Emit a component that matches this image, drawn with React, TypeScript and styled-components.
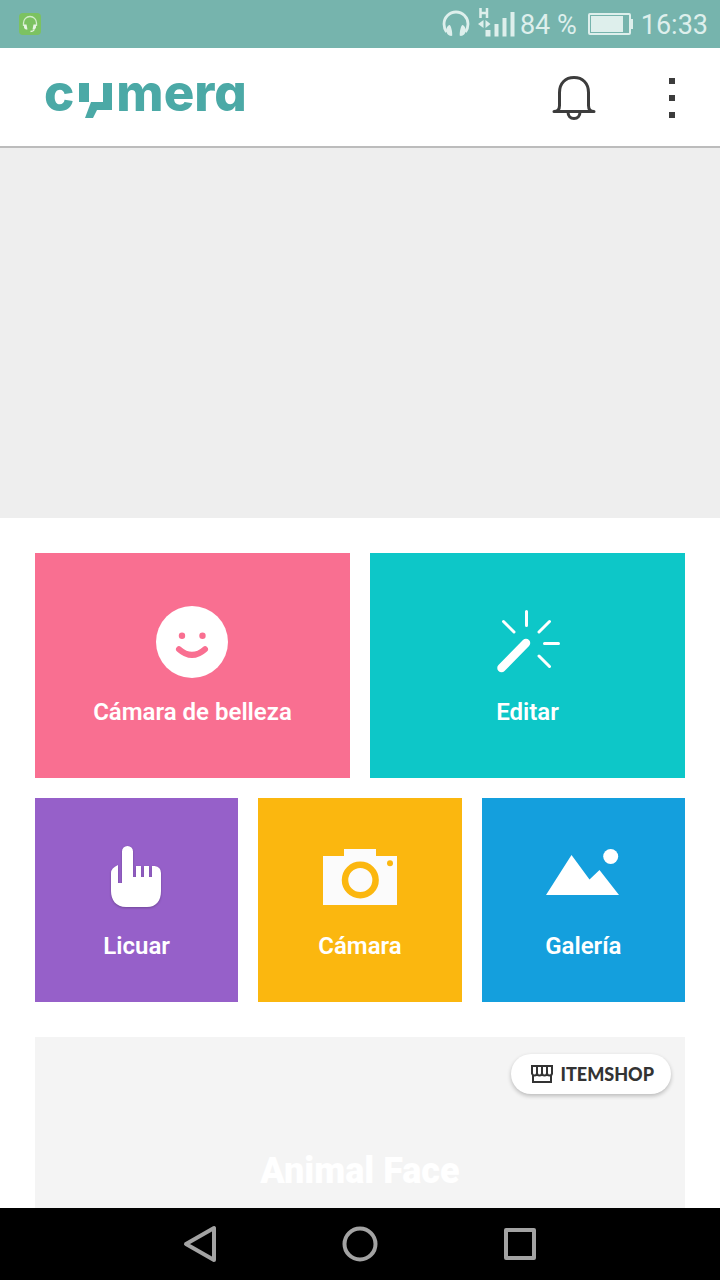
import React from "react";
import styled, { createGlobalStyle } from "styled-components";

const GlobalStyle = createGlobalStyle`
  * { box-sizing: border-box; }
  body { margin: 0; background: #ffffff; font-family: Roboto, "Liberation Sans", sans-serif; }
  button { margin: 0; padding: 0; border: 0; background: none; font: inherit; color: inherit; cursor: pointer; }
  svg { display: block; }
`;

const Screen = styled.div`
  display: flex;
  flex-direction: column;
  height: 100vh;
`;

const StatusBar = styled.div`
  flex: none;
  display: flex;
  align-items: center;
  justify-content: space-between;
  height: 48px;
  padding: 0 12px 0 18px;
  background: #76b4ad;
  color: #deefec;
  font-size: 27px;
  line-height: 32px;
`;

const StatusGroup = styled.div`
  display: flex;
  align-items: center;
  gap: 8px;
`;

const StatusText = styled.span`
  padding-top: 2px;
  white-space: nowrap;
`;

const SignalGroup = styled.div`
  display: flex;
  align-items: center;
  gap: 4px;
  padding-right: 3px;
`;

const Header = styled.header`
  flex: none;
  display: flex;
  align-items: center;
  gap: 50px;
  height: 100px;
  padding: 0 24px 0 44px;
  background: #ffffff;
  border-bottom: 2px solid #bcbcbc;
`;

const Logo = styled.h1`
  display: flex;
  align-items: center;
  gap: 4px;
  margin: 0 auto 0 0;
  color: #4ba9a6;
  font-family: Inter, "Liberation Sans", sans-serif;
  font-size: 51px;
  line-height: 60px;
  font-weight: 800;
  font-feature-settings: "cv11";
`;

const LogoText = styled.span`
  padding-bottom: 8px;
`;

const HeaderButton = styled.button`
  display: grid;
  place-items: center;
  width: 48px;
  height: 60px;
  padding-top: 2px;
`;

const Content = styled.main`
  flex: 1;
  min-height: 0;
  overflow-y: auto;
  scrollbar-width: none;
`;

const Banner = styled.section`
  height: 370px;
  background: #eeeeee;
`;

const Body = styled.div`
  display: flex;
  flex-direction: column;
  gap: 35px;
  padding: 35px;
`;

const Tiles = styled.nav`
  display: grid;
  grid-template-columns: repeat(6, 1fr);
  gap: 20px;
`;

const Tile = styled.button<{ $color: string; $large?: boolean }>`
  grid-column: span ${(p) => (p.$large ? 3 : 2)};
  display: flex;
  flex-direction: column;
  align-items: center;
  justify-content: flex-start;
  gap: ${(p) => (p.$large ? 20 : 22)}px;
  height: ${(p) => (p.$large ? 225 : 204)}px;
  padding-top: ${(p) => (p.$large ? 53 : 48)}px;
  background: ${(p) => p.$color};
  color: #ffffff;
  font-size: 24px;
  line-height: 28px;
  font-weight: 600;
`;

const ShopCard = styled.section`
  display: flex;
  flex-direction: column;
  height: 320px;
  padding: 17px 14px;
  background: #f4f4f4;
`;

const ShopButton = styled.button`
  align-self: flex-end;
  display: flex;
  align-items: center;
  gap: 7px;
  height: 40px;
  padding: 0 17px 0 19px;
  border-radius: 20px;
  background: #ffffff;
  box-shadow: 0 2px 4px rgba(0, 0, 0, 0.24);
  color: #333333;
  font-family: Lato, "Liberation Sans", sans-serif;
  font-size: 18px;
  line-height: 24px;
  font-weight: 900;
`;

const ShopTitle = styled.h2`
  margin: 55px 0 0;
  color: #ffffff;
  font-size: 36px;
  line-height: 44px;
  font-weight: 900;
  text-align: center;
`;

const SystemNav = styled.nav`
  flex: none;
  display: flex;
  align-items: center;
  justify-content: center;
  gap: 80px;
  height: 72px;
  background: #000000;
`;

const SystemButton = styled.button`
  display: grid;
  place-items: center;
  width: 80px;
  height: 72px;
`;

const ShadowedIcon = styled.svg`
  filter: drop-shadow(0 1px 1px rgba(0, 0, 0, 0.25));
`;

const AppBadge = () => (
  <svg width="24" height="24" viewBox="0 0 24 24" aria-hidden="true">
    <rect x="1" y="1" width="22" height="22" rx="4" fill="#7cc261" />
    <path d="M5.5 14v-3a6.5 6.5 0 0 1 13 0v3" fill="none" stroke="#d3eccc" strokeWidth="1.3" />
    <path d="M6 12.5h2.5l1 5H8a2.5 2.5 0 0 1-2-2zM18 12.5h-2.5l-1 5H16a2.5 2.5 0 0 0 2-2z" fill="#e7f5e3" />
    <path d="M16.5 17.5c-1 1.5-2 2-4 2" fill="none" stroke="#e7f5e3" strokeWidth="1.3" />
  </svg>
);

const HeadphonesIcon = () => (
  <svg width="28" height="28" viewBox="0 0 28 28" aria-hidden="true">
    <path d="M4.5 22C2.5 19 2 16.500 2 14a12 12 0 0 1 24 0c0 2.500-.5 5-2.500 8" fill="none" stroke="#deefec" strokeWidth="2.8" />
    <path d="M7.8 15c1.500 1.500 2.800 7.500 2.400 10.800-3 .7-5.600-1.600-5.900-4.800-.2-2.500 1-5.500 3.500-6zM20.200 15c-1.500 1.500-2.800 7.500-2.400 10.800 3 .7 5.600-1.600 5.900-4.800.2-2.500-1-5.500-3.500-6z" fill="#deefec" />
  </svg>
);

const SignalIcon = () => (
  <svg width="38" height="32" viewBox="0 2 38 32" aria-hidden="true">
    <path d="M2.500 2v10M9 2v10M2.500 7H9" fill="none" stroke="#deefec" strokeWidth="2.500" />
    <path d="M5.500 14v8L0 18zM7.500 14v8l5-4z" fill="#deefec" />
    <path d="M7.500 24h5v6.500h-5zM16.500 18h4v12.500h-4zM24.500 12h4v18.500h-4zM32.500 6h4v24.500h-4z" fill="#deefec" />
  </svg>
);

const BatteryIcon = () => (
  <svg width="45" height="24" viewBox="0 0 45 24" aria-hidden="true">
    <rect x="1" y="2" width="41" height="20" rx="1" fill="none" stroke="#deefec" strokeWidth="2" />
    <path d="M3 4h32v16H3zM43 7h2v10h-2z" fill="#deefec" />
  </svg>
);

const LogoMark = () => (
  <svg width="34" height="42" viewBox="0 0 34 42" role="img" aria-label="y">
    <path d="M1 7h10v19H1zM25 7h9v27H19l-4 8H7l6-16h12z" fill="#4ba9a6" />
  </svg>
);

const BellIcon = () => (
  <svg width="44" height="46" viewBox="0 0 44 46" fill="none" stroke="#3c3c3c" strokeWidth="3" strokeLinecap="round" strokeLinejoin="round" aria-hidden="true">
    <path d="M2 36.500c4 0 5.500-2.500 5.500-6V17.500C7.500 8 13.500 2.500 22 2.500S36.500 8 36.500 17.500v13c0 3.500 1.500 6 5.500 6z" />
    <path d="M16 37c0 4 2.300 6.500 6 6.500s6-2.500 6-6.500" />
  </svg>
);

const MoreIcon = () => (
  <svg width="6" height="42" viewBox="0 0 6 42" aria-hidden="true">
    <path d="M0 1h6v6H0zM0 18h6v6H0zM0 35h6v6H0z" fill="#3c3c3c" />
  </svg>
);

const SmileIcon = () => (
  <svg width="72" height="72" viewBox="0 0 72 72" aria-hidden="true">
    <circle cx="36" cy="36" r="36" fill="#ffffff" />
    <g fill="#f96f91">
      <circle cx="26" cy="29.700" r="3.200" />
      <circle cx="46.500" cy="29.700" r="3.200" />
    </g>
    <path d="M23 43.200q13 11.500 26 0" fill="none" stroke="#f96f91" strokeWidth="6" strokeLinecap="round" />
  </svg>
);

const WandIcon = () => (
  <svg width="72" height="72" viewBox="0 0 72 72" fill="none" stroke="#ffffff" strokeLinecap="round" aria-hidden="true">
    <path d="M10.500 62 35 37" strokeWidth="8.500" />
    <path d="M35.500 5.500v14M12.500 15.500 23 26M58.500 15.500 48 26M53.500 37.500h14M48 50 58.500 60.500" strokeWidth="3" />
  </svg>
);

const HandIcon = () => (
  <ShadowedIcon width="52" height="64" viewBox="0 0 52 64" aria-hidden="true">
    <path
      d="M11 5.500a5.500 5.500 0 0 1 11 0V31h3V20h5v11h3V20h5v11h3V20h2.500q6.500 1 6.500 7v18c0 10-5 16-14 16H15C5 61 0 54 0 45V27q0-5 7-8v18h4z"
      fill="#ffffff"
    />
  </ShadowedIcon>
);

const CameraIcon = () => (
  <svg width="74" height="64" viewBox="0 0 74 64" aria-hidden="true">
    <path d="M0 10h21V3h32v7h21v49H0z" fill="#fbfbfb" />
    <circle cx="37.300" cy="34" r="15.300" fill="none" stroke="#fbb70f" strokeWidth="6.500" />
    <circle cx="67" cy="17.300" r="3" fill="#fbb70f" />
  </svg>
);

const GalleryIcon = () => (
  <svg width="74" height="64" viewBox="0 0 74 64" aria-hidden="true">
    <path d="M0 49 25.500 9l18 24.500 10-9.500L73 49z" fill="#ffffff" />
    <circle cx="64.700" cy="10.500" r="7.500" fill="#ffffff" />
  </svg>
);

const ShopIcon = () => (
  <svg width="23" height="20" viewBox="0 0 23 20" fill="none" stroke="#333333" strokeWidth="2" aria-hidden="true">
    <path d="M2 10V2h20v8M7 2v8M12 2v8M17 2v8" />
    <path d="M2 9a2.500 2.500 0 0 0 5 0 2.500 2.500 0 0 0 5 0 2.500 2.500 0 0 0 5 0 2.500 2.500 0 0 0 5 0" />
    <path d="M3 11v7h18v-7" />
  </svg>
);

const largeTiles = [
  { label: "Cámara de belleza", color: "#f96f91", icon: <SmileIcon /> },
  { label: "Editar", color: "#0dc7c8", icon: <WandIcon /> },
];

const smallTiles = [
  { label: "Licuar", color: "#9660c9", icon: <HandIcon /> },
  { label: "Cámara", color: "#fbb70f", icon: <CameraIcon /> },
  { label: "Galería", color: "#149fdd", icon: <GalleryIcon /> },
];

export default function App() {
  return (
    <Screen>
      <GlobalStyle />
      <StatusBar>
        <AppBadge />
        <StatusGroup>
          <HeadphonesIcon />
          <SignalGroup>
            <SignalIcon />
            <StatusText>84 %</StatusText>
          </SignalGroup>
          <BatteryIcon />
          <StatusText>16:33</StatusText>
        </StatusGroup>
      </StatusBar>
      <Header>
        <Logo>
          <LogoText>c</LogoText>
          <LogoMark />
          <LogoText>mera</LogoText>
        </Logo>
        <HeaderButton aria-label="Notificaciones">
          <BellIcon />
        </HeaderButton>
        <HeaderButton aria-label="Más opciones">
          <MoreIcon />
        </HeaderButton>
      </Header>
      <Content>
        <Banner />
        <Body>
          <Tiles>
            {largeTiles.map((t) => (
              <Tile key={t.label} $color={t.color} $large>
                {t.icon}
                <span>{t.label}</span>
              </Tile>
            ))}
            {smallTiles.map((t) => (
              <Tile key={t.label} $color={t.color}>
                {t.icon}
                <span>{t.label}</span>
              </Tile>
            ))}
          </Tiles>
          <ShopCard>
            <ShopButton>
              <ShopIcon />
              <span>ITEMSHOP</span>
            </ShopButton>
            <ShopTitle>Animal Face</ShopTitle>
          </ShopCard>
        </Body>
      </Content>
      <SystemNav>
        <SystemButton aria-label="Atrás">
          <svg width="36" height="40" viewBox="0 0 36 40" fill="none" stroke="#a3a3a3" strokeWidth="4" strokeLinejoin="round" aria-hidden="true">
            <path d="M32 4v32L4 20z" />
          </svg>
        </SystemButton>
        <SystemButton aria-label="Inicio">
          <svg width="36" height="36" viewBox="0 0 36 36" fill="none" stroke="#a3a3a3" strokeWidth="4" aria-hidden="true">
            <circle cx="18" cy="18" r="15.500" />
          </svg>
        </SystemButton>
        <SystemButton aria-label="Recientes">
          <svg width="32" height="32" viewBox="0 0 32 32" fill="none" stroke="#a3a3a3" strokeWidth="4" strokeLinejoin="round" aria-hidden="true">
            <path d="M2 2h28v28H2z" />
          </svg>
        </SystemButton>
      </SystemNav>
    </Screen>
  );
}
